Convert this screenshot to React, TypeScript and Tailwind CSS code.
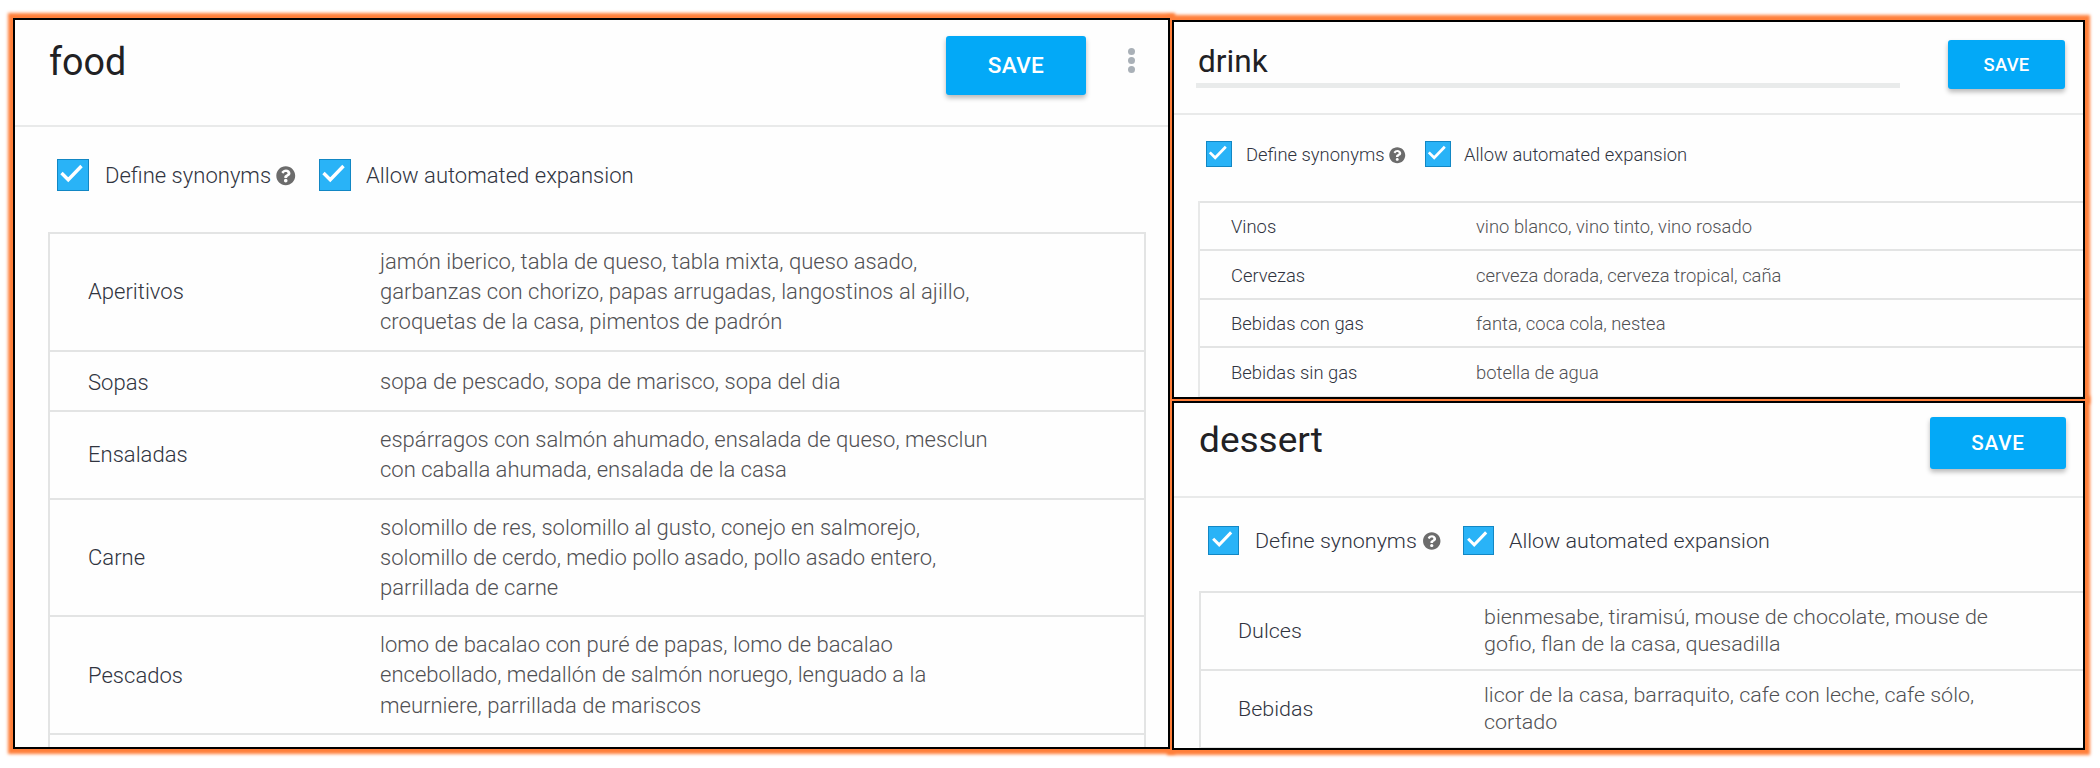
import { FaQuestionCircle } from "react-icons/fa";

type Entry = { label: string; lines: string[]; height: string };

type Theme = {
  frame: string;
  header: string;
  title: string;
  underline?: string;
  save: string;
  menu?: string;
  options: string;
  box: string;
  text: string;
  define: string;
  help: string;
  allow: string;
  table: string;
  labelCell: string;
  lineHeight: string;
};

type PanelProps = { name: string; entries: Entry[]; theme: Theme; openEnd?: boolean };

function Checkbox({ size }: { size: string }) {
  return (
    <span className={`block shrink-0 border border-[#1287c4] bg-[#29b3f7] ${size}`}>
      <svg viewBox="0 0 24 24" className="block size-full" fill="none" stroke="#fff" strokeWidth="2.7">
        <path d="M2.8 10.4 L8.2 15.8 L18.8 4.8" />
      </svg>
    </span>
  );
}

function Panel({ name, entries, theme, openEnd }: PanelProps) {
  return (
    <section
      className={`relative before:absolute before:inset-0 before:-z-10 before:shadow-[0_0_3px_5px_#ff7f3a] before:content-[''] ${theme.frame}`}
    >
      <div className="flex h-full flex-col overflow-hidden border-2 border-black bg-[#fefefe]">
        <header className={`flex shrink-0 items-start border-b-2 border-[#e9eaea] ${theme.header}`}>
          <div className={theme.underline}>
            <h1 className={`origin-left whitespace-nowrap text-[#212124] ${theme.title}`}>{name}</h1>
          </div>
          <button
            className={`ml-auto flex shrink-0 items-center justify-center rounded-[3px] bg-[#03a9f7] font-medium text-white shadow-[0_3px_5px_rgba(0,0,0,0.28)] ${theme.save}`}
          >
            SAVE
          </button>
          {theme.menu && (
            <div className={theme.menu}>
              <i className="block size-[7px] rounded-full bg-[#a9b0b7]" />
              <i className="block size-[7px] rounded-full bg-[#a9b0b7]" />
              <i className="block size-[7px] rounded-full bg-[#a9b0b7]" />
            </div>
          )}
        </header>
        <div className={`flex shrink-0 items-start font-light text-[#30343f] ${theme.options}`}>
          <Checkbox size={theme.box} />
          <span className={theme.define}>
            <span className={`block origin-left whitespace-nowrap ${theme.text}`}>Define synonyms</span>
          </span>
          <FaQuestionCircle className={`shrink-0 text-[#6c6c6c] ${theme.help}`} />
          <Checkbox size={theme.box} />
          <span className={theme.allow}>
            <span className={`block origin-left whitespace-nowrap ${theme.text}`}>Allow automated expansion</span>
          </span>
        </div>
        <div className={`font-light ${theme.table}`}>
          {entries.map((e) => (
            <div key={e.label} className={`flex items-center border-t-2 border-[#e3e4e4] ${e.height}`}>
              <div className={`shrink-0 text-[#30343f] ${theme.labelCell}`}>
                <div className={`origin-left whitespace-nowrap ${theme.text}`}>{e.label}</div>
              </div>
              <div className={`text-[#505053] ${theme.lineHeight}`}>
                {e.lines.map((l) => (
                  <div key={l} className={`origin-left whitespace-nowrap ${theme.text}`}>
                    {l}
                  </div>
                ))}
              </div>
            </div>
          ))}
          <div className={`border-t-2 border-[#e3e4e4] ${openEnd ? "h-10" : "h-2"}`} />
        </div>
      </div>
    </section>
  );
}

const food: Theme = {
  frame: "w-[1157px] h-[731px]",
  header: "h-[107px] pl-[33.5px] pr-[33px]",
  title: "mt-[22px] text-[38.8px] leading-[40px] scale-x-[0.97]",
  save: "mt-[16px] h-[59px] w-[140px] text-[22.6px] tracking-[0.3px]",
  menu: "ml-[42px] mt-[28px] flex w-[7px] flex-col gap-[2px]",
  options: "h-[105px] pt-[32px] pl-[41.5px]",
  box: "size-[32px]",
  text: "text-[22.6px] scale-x-[0.976]",
  define: "ml-[16.5px] w-[171px] pt-[1px] leading-[32px]",
  help: "mt-[7px] mr-[23px] size-[19.5px]",
  allow: "ml-[15px] pt-[1px] leading-[32px]",
  table: "ml-[33px] mr-[22px] border-x-2 border-[#e3e4e4]",
  labelCell: "w-[330px] pl-[37.5px]",
  lineHeight: "leading-[30.3px]",
};

const drink: Theme = {
  frame: "w-[913px] h-[379px]",
  header: "h-[93px] pl-[22px] pr-[18px]",
  title: "mt-[20px] pl-[2px] text-[31.6px] leading-[40px]",
  underline: "h-[66px] w-[704px] border-b-[5px] border-[#e9ebeb]",
  save: "mt-[18px] h-[49px] w-[117px] text-[18.4px] tracking-[0.3px]",
  options: "h-[86px] pt-[26px] pl-[31.5px]",
  box: "size-[26px]",
  text: "text-[18.4px]",
  define: "ml-[14.5px] w-[143px] pt-[1px] leading-[26px]",
  help: "mt-[6px] mr-[19px] size-[16.5px]",
  allow: "ml-[13.5px] pt-[1px] leading-[26px]",
  table: "ml-[24px] border-l-2 border-[#e8e9e9]",
  labelCell: "w-[276px] pl-[31px] pt-[1px]",
  lineHeight: "leading-[24px] pt-[1px]",
};

const dessert: Theme = {
  frame: "w-[913px] h-[349px]",
  header: "h-[95px] pl-[25px] pr-[17px]",
  title: "mt-[17px] text-[34.2px] leading-[40px] scale-x-[1.083]",
  save: "mt-[14px] h-[52px] w-[136px] text-[20.6px] tracking-[0.8px]",
  options: "h-[93px] pt-[28px] pl-[34px]",
  box: "h-[29px] w-[31px]",
  text: "text-[19.8px] scale-x-[1.086]",
  define: "ml-[16px] w-[167px] pt-[1px] leading-[29px]",
  help: "mt-[6px] mr-[21.5px] h-[18px] w-[19.5px]",
  allow: "ml-[15px] pt-[1px] leading-[29px]",
  table: "ml-[25px] border-l-2 border-[#e3e4e4]",
  labelCell: "w-[282.5px] pl-[36.5px] pt-[2px]",
  lineHeight: "leading-[26.7px] pt-[1px]",
};

const foodEntries: Entry[] = [
  {
    label: "Aperitivos",
    height: "h-[118px]",
    lines: [
      "jamón iberico, tabla de queso, tabla mixta, queso asado,",
      "garbanzas con chorizo, papas arrugadas, langostinos al ajillo,",
      "croquetas de la casa, pimentos de padrón",
    ],
  },
  { label: "Sopas", height: "h-[60px] pt-[3px]", lines: ["sopa de pescado, sopa de marisco, sopa del dia"] },
  {
    label: "Ensaladas",
    height: "h-[88px]",
    lines: ["espárragos con salmón ahumado, ensalada de queso, mesclun", "con caballa ahumada, ensalada de la casa"],
  },
  {
    label: "Carne",
    height: "h-[117px] pt-[1px]",
    lines: [
      "solomillo de res, solomillo al gusto, conejo en salmorejo,",
      "solomillo de cerdo, medio pollo asado, pollo asado entero,",
      "parrillada de carne",
    ],
  },
  {
    label: "Pescados",
    height: "h-[118px] pt-[1px]",
    lines: [
      "lomo de bacalao con puré de papas, lomo de bacalao",
      "encebollado, medallón de salmón noruego, lenguado a la",
      "meurniere, parrillada de mariscos",
    ],
  },
];

const drinkEntries: Entry[] = [
  { label: "Vinos", height: "h-[48px]", lines: ["vino blanco, vino tinto, vino rosado"] },
  { label: "Cervezas", height: "h-[49px] pt-[2px]", lines: ["cerveza dorada, cerveza tropical, caña"] },
  { label: "Bebidas con gas", height: "h-[48px]", lines: ["fanta, coca cola, nestea"] },
  { label: "Bebidas sin gas", height: "h-[50px] pt-[1px]", lines: ["botella de agua"] },
];

const dessertEntries: Entry[] = [
  {
    label: "Dulces",
    height: "h-[78px]",
    lines: ["bienmesabe, tiramisú, mouse de chocolate, mouse de", "gofio, flan de la casa, quesadilla"],
  },
  {
    label: "Bebidas",
    height: "h-[78px]",
    lines: ["licor de la casa, barraquito, cafe con leche, cafe sólo,", "cortado"],
  },
];

export default function App() {
  return (
    <main className="isolate flex h-[768px] w-[2100px] items-start gap-[2px] overflow-hidden bg-white pl-[13px] pt-[18px] font-['Roboto',sans-serif]">
      <Panel name="food" entries={foodEntries} theme={food} openEnd />
      <div className="flex flex-col gap-[2px] pt-[2px]">
        <Panel name="drink" entries={drinkEntries} theme={drink} />
        <Panel name="dessert" entries={dessertEntries} theme={dessert} />
      </div>
    </main>
  );
}
